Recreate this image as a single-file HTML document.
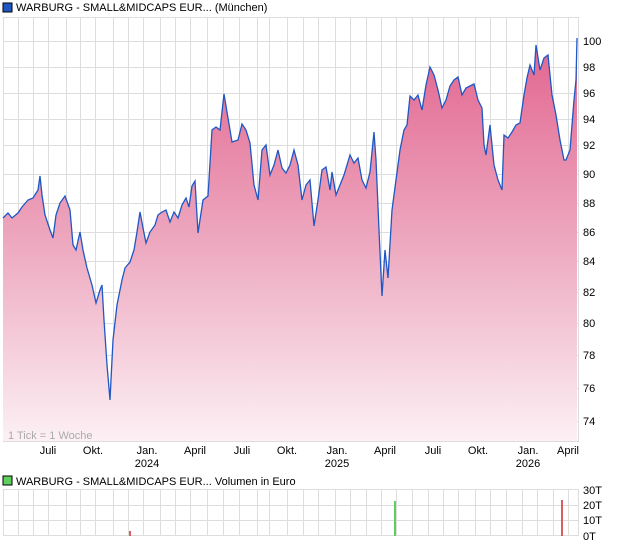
<!DOCTYPE html>
<html><head><meta charset="utf-8"><style>
body{margin:0;background:#fff;width:620px;height:546px;overflow:hidden;font-family:"Liberation Sans",sans-serif}
</style></head><body>
<svg width="620" height="546" viewBox="0 0 620 546" xmlns="http://www.w3.org/2000/svg" font-family="Liberation Sans, sans-serif" font-size="11">
<defs>
<linearGradient id="g" x1="0" y1="38" x2="0" y2="441" gradientUnits="userSpaceOnUse">
<stop offset="0" stop-color="#e2648e"/>
<stop offset="0.5" stop-color="#eda7bf"/>
<stop offset="1" stop-color="#fcf0f4"/>
</linearGradient>
</defs>
<rect x="3" y="3" width="9" height="9" fill="#1f57c3" stroke="#000" stroke-width="1"/>
<text x="16" y="11">WARBURG - SMALL&amp;MIDCAPS EUR... (München)</text>
<g stroke="#dddddd" stroke-width="1" fill="none">
<rect x="3.5" y="17.5" width="575" height="424"/>
<path d="M3 41.5H578M3 67.5H578M3 93.5H578M3 119.5H578M3 145.5H578M3 174.5H578M3 203.5H578M3 232.5H578M3 261.5H578M3 292.5H578M3 323.5H578M3 355.5H578M3 388.5H578M3 421.5H578"/>
<path d="M18.5 17V441M33.5 17V441M48.5 17V441M66.5 17V441M80.5 17V441M95.5 17V441M113.5 17V441M128.5 17V441M143.5 17V441M160.5 17V441M175.5 17V441M190.5 17V441M207.5 17V441M223.5 17V441M239.5 17V441M257.5 17V441M269.5 17V441M287.5 17V441M303.5 17V441M318.5 17V441M335.5 17V441M350.5 17V441M366.5 17V441M381.5 17V441M396.5 17V441M412.5 17V441M428.5 17V441M443.5 17V441M458.5 17V441M475.5 17V441M490.5 17V441M506.5 17V441M522.5 17V441M537.5 17V441M553.5 17V441M568.5 17V441"/>
</g>
<path fill="url(#g)" stroke="none" d="M3,441 L3,218 L8,213 L12,218 L18,213 L22,207 L28,200 L33,198 L38,190 L40,176 L42,195 L45,215 L50,230 L53,238 L56,215 L60,203 L65,196 L70,210 L73,245 L76,250 L80,232 L83,250 L87,268 L92,285 L96,303 L100,290 L102,285 L104,320 L107,365 L110,400 L113,340 L117,305 L122,280 L125,268 L130,262 L134,250 L137,232 L140,212 L143,228 L146,243 L150,232 L155,225 L158,215 L162,212 L166,210 L170,222 L174,212 L178,218 L182,205 L186,198 L189,207 L192,186 L195,181 L198,233 L203,200 L208,196 L212,130 L216,127 L220,130 L224,94 L228,118 L232,142 L238,140 L242,124 L246,130 L250,143 L254,185 L258,200 L262,150 L266,145 L270,175 L274,165 L278,150 L282,168 L286,173 L290,165 L294,150 L298,165 L302,200 L306,185 L310,180 L314,226 L318,200 L322,170 L326,167 L330,190 L332,172 L336,195 L340,185 L344,175 L350,155 L354,163 L358,158 L362,180 L366,188 L370,172 L374,132 L376,160 L379,230 L382,296 L385,250 L388,278 L392,210 L396,180 L400,150 L404,130 L407,125 L410,96 L414,100 L418,95 L422,110 L426,85 L430,67 L434,75 L438,90 L442,108 L446,100 L450,86 L454,80 L458,77 L462,95 L466,88 L470,86 L474,84 L478,100 L482,108 L484,145 L486,155 L490,125 L494,165 L498,180 L502,190 L504,135 L508,138 L512,132 L516,125 L520,123 L524,95 L527,78 L530,65 L534,75 L536,45 L540,70 L544,58 L548,55 L552,95 L556,115 L560,140 L564,160 L566,160 L570,150 L574,100 L576,80 L577,38 L577,441 Z"/>
<path fill="none" stroke="#1f57c3" stroke-width="1.3" d="M3,218 L8,213 L12,218 L18,213 L22,207 L28,200 L33,198 L38,190 L40,176 L42,195 L45,215 L50,230 L53,238 L56,215 L60,203 L65,196 L70,210 L73,245 L76,250 L80,232 L83,250 L87,268 L92,285 L96,303 L100,290 L102,285 L104,320 L107,365 L110,400 L113,340 L117,305 L122,280 L125,268 L130,262 L134,250 L137,232 L140,212 L143,228 L146,243 L150,232 L155,225 L158,215 L162,212 L166,210 L170,222 L174,212 L178,218 L182,205 L186,198 L189,207 L192,186 L195,181 L198,233 L203,200 L208,196 L212,130 L216,127 L220,130 L224,94 L228,118 L232,142 L238,140 L242,124 L246,130 L250,143 L254,185 L258,200 L262,150 L266,145 L270,175 L274,165 L278,150 L282,168 L286,173 L290,165 L294,150 L298,165 L302,200 L306,185 L310,180 L314,226 L318,200 L322,170 L326,167 L330,190 L332,172 L336,195 L340,185 L344,175 L350,155 L354,163 L358,158 L362,180 L366,188 L370,172 L374,132 L376,160 L379,230 L382,296 L385,250 L388,278 L392,210 L396,180 L400,150 L404,130 L407,125 L410,96 L414,100 L418,95 L422,110 L426,85 L430,67 L434,75 L438,90 L442,108 L446,100 L450,86 L454,80 L458,77 L462,95 L466,88 L470,86 L474,84 L478,100 L482,108 L484,145 L486,155 L490,125 L494,165 L498,180 L502,190 L504,135 L508,138 L512,132 L516,125 L520,123 L524,95 L527,78 L530,65 L534,75 L536,45 L540,70 L544,58 L548,55 L552,95 L556,115 L560,140 L564,160 L566,160 L570,150 L574,100 L576,80 L577,38"/>
<text x="8" y="439" fill="#aaaaaa">1 Tick = 1 Woche</text>
<g fill="#000">
<text x="583" y="45">100</text><text x="583" y="71">98</text><text x="583" y="97">96</text><text x="583" y="123">94</text><text x="583" y="149">92</text><text x="583" y="178">90</text><text x="583" y="207">88</text><text x="583" y="236">86</text><text x="583" y="265">84</text><text x="583" y="296">82</text><text x="583" y="327">80</text><text x="583" y="359">78</text><text x="583" y="392">76</text><text x="583" y="425">74</text>
</g>
<g fill="#000" text-anchor="middle">
<text x="48" y="454">Juli</text><text x="93" y="454">Okt.</text><text x="147" y="454">Jan.</text><text x="147" y="467">2024</text><text x="195" y="454">April</text><text x="242" y="454">Juli</text><text x="287" y="454">Okt.</text><text x="337" y="454">Jan.</text><text x="337" y="467">2025</text><text x="385" y="454">April</text><text x="433" y="454">Juli</text><text x="478" y="454">Okt.</text><text x="528" y="454">Jan.</text><text x="528" y="467">2026</text><text x="568" y="454">April</text>
</g>
<rect x="3" y="476" width="9" height="9" fill="#5dd05d" stroke="#000" stroke-width="1"/>
<text x="16" y="485">WARBURG - SMALL&amp;MIDCAPS EUR... Volumen in Euro</text>
<g stroke="#dddddd" stroke-width="1" fill="none">
<rect x="3.5" y="489.5" width="575" height="46"/>
<path d="M3 505.5H578M3 520.5H578"/>
<path d="M18.5 489V536M33.5 489V536M48.5 489V536M66.5 489V536M80.5 489V536M95.5 489V536M113.5 489V536M128.5 489V536M143.5 489V536M160.5 489V536M175.5 489V536M190.5 489V536M207.5 489V536M223.5 489V536M239.5 489V536M257.5 489V536M269.5 489V536M287.5 489V536M303.5 489V536M318.5 489V536M335.5 489V536M350.5 489V536M366.5 489V536M381.5 489V536M396.5 489V536M412.5 489V536M428.5 489V536M443.5 489V536M458.5 489V536M475.5 489V536M490.5 489V536M506.5 489V536M522.5 489V536M537.5 489V536M553.5 489V536M568.5 489V536"/>
</g>
<rect x="129" y="531" width="2" height="5" fill="#d86060"/>
<rect x="394" y="501" width="2" height="35" fill="#5dd05d"/>
<rect x="561" y="500" width="2" height="36" fill="#d86060"/>
<g fill="#000"><text x="583" y="494">30T</text><text x="583" y="509">20T</text><text x="583" y="524">10T</text><text x="583" y="540">0T</text></g>
</svg>
</body></html>
